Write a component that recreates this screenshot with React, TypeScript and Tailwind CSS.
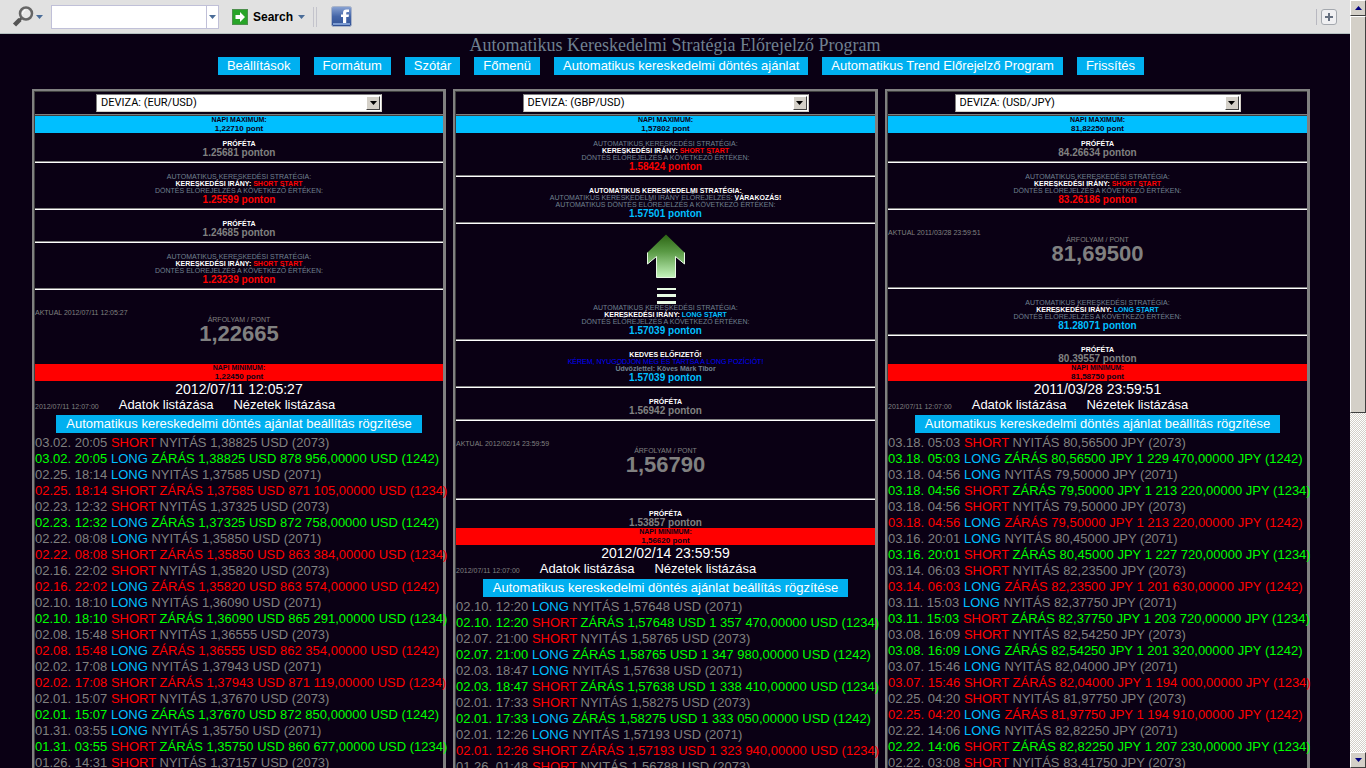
import type { ReactNode } from 'react';

type Direction = 'LONG' | 'SHORT';

interface Trade {
    when: string;
    dir: Direction;
    price: string;
    // closing balance, missing while the position is still open
    total?: string;
    gain?: boolean;
}

// ─── data ─────────────────────────────────────────────────────────────────────

const NAV = [
    'Beállítások',
    'Formátum',
    'Szótár',
    'Főmenü',
    'Automatikus kereskedelmi döntés ajánlat',
    'Automatikus Trend Előrejelző Program',
    'Frissítés',
];

const EUR_TRADES: Trade[] = [
    { when: '03.02. 20:05', dir: 'SHORT', price: '1,38825', total: '878 956,00000', gain: true },
    { when: '02.25. 18:14', dir: 'LONG', price: '1,37585', total: '871 105,00000' },
    { when: '02.23. 12:32', dir: 'SHORT', price: '1,37325', total: '872 758,00000', gain: true },
    { when: '02.22. 08:08', dir: 'LONG', price: '1,35850', total: '863 384,00000' },
    { when: '02.16. 22:02', dir: 'SHORT', price: '1,35820', total: '863 574,00000' },
    { when: '02.10. 18:10', dir: 'LONG', price: '1,36090', total: '865 291,00000', gain: true },
    { when: '02.08. 15:48', dir: 'SHORT', price: '1,36555', total: '862 354,00000' },
    { when: '02.02. 17:08', dir: 'LONG', price: '1,37943', total: '871 119,00000' },
    { when: '02.01. 15:07', dir: 'SHORT', price: '1,37670', total: '872 850,00000', gain: true },
    { when: '01.31. 03:55', dir: 'LONG', price: '1,35750', total: '860 677,00000', gain: true },
    { when: '01.26. 14:31', dir: 'SHORT', price: '1,37157' },
];

const GBP_TRADES: Trade[] = [
    { when: '02.10. 12:20', dir: 'LONG', price: '1,57648', total: '1 357 470,00000', gain: true },
    { when: '02.07. 21:00', dir: 'SHORT', price: '1,58765', total: '1 347 980,00000', gain: true },
    { when: '02.03. 18:47', dir: 'LONG', price: '1,57638', total: '1 338 410,00000', gain: true },
    { when: '02.01. 17:33', dir: 'SHORT', price: '1,58275', total: '1 333 050,00000', gain: true },
    { when: '02.01. 12:26', dir: 'LONG', price: '1,57193', total: '1 323 940,00000' },
    { when: '01.26. 01:48', dir: 'SHORT', price: '1,56788' },
];

const JPY_TRADES: Trade[] = [
    { when: '03.18. 05:03', dir: 'SHORT', price: '80,56500', total: '1 229 470,00000', gain: true },
    { when: '03.18. 04:56', dir: 'LONG', price: '79,50000', total: '1 213 220,00000', gain: true },
    { when: '03.18. 04:56', dir: 'SHORT', price: '79,50000', total: '1 213 220,00000' },
    { when: '03.16. 20:01', dir: 'LONG', price: '80,45000', total: '1 227 720,00000', gain: true },
    { when: '03.14. 06:03', dir: 'SHORT', price: '82,23500', total: '1 201 630,00000' },
    { when: '03.11. 15:03', dir: 'LONG', price: '82,37750', total: '1 203 720,00000', gain: true },
    { when: '03.08. 16:09', dir: 'SHORT', price: '82,54250', total: '1 201 320,00000', gain: true },
    { when: '03.07. 15:46', dir: 'LONG', price: '82,04000', total: '1 194 000,00000' },
    { when: '02.25. 04:20', dir: 'SHORT', price: '81,97750', total: '1 194 910,00000' },
    { when: '02.22. 14:06', dir: 'LONG', price: '82,82250', total: '1 207 230,00000', gain: true },
    { when: '02.22. 03:08', dir: 'SHORT', price: '83,41750' },
];

const DIR_CLASSES: Record<Direction, string> = {
    LONG: 'text-[#00bfff]',
    SHORT: 'text-[#ff0000]',
};

// ─── icons ────────────────────────────────────────────────────────────────────

function MagnifierSvg() {
    return (
        <svg className="w-[22px] h-[22px]" viewBox="0 0 22 22" fill="none">
            <path d="M2.500 19L8 13.500" stroke="#555" strokeWidth="4.500" />
            <path d="M7.500 14L10 11.500" stroke="#555" strokeWidth="2.500" />
            <circle cx="14" cy="7.500" r="6" fill="#e8e8e8" stroke="#666" strokeWidth="2.500" />
            <path d="M10.500 8a4 4 0 013-4" stroke="#fff" />
        </svg>
    );
}

function CaretSvg() {
    return (
        <svg className="w-[7px] h-1" viewBox="0 0 7 4">
            <path d="M0 0h7L3.500 4z" fill="#4a6c98" />
        </svg>
    );
}

function GoSvg() {
    return (
        <svg className="w-4 h-4" viewBox="0 0 16 16">
            <rect x=".5" y=".5" width="15" height="15" fill="#28a428" stroke="#4d8f4d" />
            <path d="M3.500 6H8V3l5 5-5 5v-3H3.500z" fill="#fff" />
        </svg>
    );
}

function FacebookSvg() {
    return (
        <svg className="w-[22px] h-[22px]" viewBox="0 0 22 22">
            <defs>
                <linearGradient id="fb" x1="0" y1="0" x2="0" y2="1">
                    <stop offset="0" stopColor="#8aa4d4" />
                    <stop offset=".5" stopColor="#4566a8" />
                    <stop offset="1" stopColor="#2f4f94" />
                </linearGradient>
            </defs>
            <rect x=".5" y=".5" width="20" height="20" rx="2" fill="url(#fb)" stroke="#aab4c8" />
            <path d="M2 17h17v2H2z" fill="#7c9bd2" />
            <path d="M12 17v-6h-2V8.500h2V7c0-2.500 1.300-3.500 3.300-3.500H18V6h-1.500c-1 0-1.300.5-1.300 1.300v1.200H18l-.4 2.500h-2.400v6z" fill="#fff" />
        </svg>
    );
}

function PlusSvg() {
    return (
        <svg className="w-4 h-4" viewBox="0 0 16 16">
            <rect x=".5" y=".5" width="15" height="15" rx="2.500" fill="#f0f0f2" stroke="#a4a8ae" />
            <path d="M8 4v8M4 8h8" stroke="#667080" strokeWidth="2" />
        </svg>
    );
}

function UpArrowSvg() {
    return (
        <svg className="w-10 h-[70px] mx-auto" viewBox="0 0 40 70">
            <defs>
                <linearGradient id="up" x1="0" y1="0" x2="0" y2="1">
                    <stop offset="0" stopColor="#2c6413" />
                    <stop offset=".4" stopColor="#5a9a45" />
                    <stop offset="1" stopColor="#c4f4bc" />
                </linearGradient>
            </defs>
            <path d="M20 .5L38.500 18.500V30L29.500 22.500V43.500H10.500V22.500L1.500 30V18.500z" fill="url(#up)" />
            <path d="M1.500 18.500V30L10.500 22.500V43.500H29.500V22.500L38.500 30V18.500" fill="none" stroke="#e8f8e4" />
            <path d="M11 54h19v2H11zM11 60h19v3H11zM11 67h19v3H11z" fill="#e8fbe4" />
        </svg>
    );
}

function TriangleSvg({ down = false, dark = false }: { down?: boolean; dark?: boolean }) {
    return (
        <svg className="w-[7px] h-1" viewBox="0 0 7 4">
            <path d={down ? 'M0 0h7L3.500 4z' : 'M0 4h7L3.500 0z'} fill={dark ? '#000' : '#000080'} />
        </svg>
    );
}

// ─── browser chrome ───────────────────────────────────────────────────────────

function Toolbar() {
    return (
        <div className="flex items-center h-[34px] shrink-0 bg-[#e1e1e1] border-b border-[#b4c0c0] pl-3 pr-[13px]">
            <button type="button" aria-label="Keresőmotor" className="flex items-center gap-[2px] w-[39px]">
                <MagnifierSvg />
                <CaretSvg />
            </button>
            <div className="flex w-[168px] h-6 bg-white border border-[#c0c0d8]">
                <input type="text" aria-label="Keresés" className="flex-1 min-w-0 px-1 text-xs outline-none" />
                <button type="button" aria-label="Előzmények" className="w-3 flex items-center justify-center border-l border-[#c0c0d8]">
                    <CaretSvg />
                </button>
            </div>
            <button type="button" className="flex items-center gap-[5px] ml-[13px] text-xs font-bold text-black">
                <GoSvg />
                Search
                <CaretSvg />
            </button>
            <div className="w-1 h-5 ml-2 mr-[14px] border-x border-[#c4c4cc]" />
            <button type="button" aria-label="Facebook">
                <FacebookSvg />
            </button>
            <div className="w-px h-4 ml-auto mr-1 bg-[#b8b8c0]" />
            <button type="button" aria-label="Hozzáadás">
                <PlusSvg />
            </button>
        </div>
    );
}

const BEVEL = 'bg-[#d4d0c8] border border-t-white border-l-white border-r-[#404040] border-b-[#404040]';

function Scrollbar() {
    return (
        <div className="flex flex-col w-4 shrink-0 bg-[repeating-conic-gradient(#d4d0c8_0_25%,#ffffff_0_50%)] bg-[length:2px_2px]">
            <button type="button" aria-label="Fel" className={`h-4 flex items-center justify-center ${BEVEL}`}>
                <TriangleSvg />
            </button>
            <div className="flex-1">
                <div className={`h-[54%] ${BEVEL}`} />
            </div>
            <button type="button" aria-label="Le" className={`h-4 flex items-center justify-center ${BEVEL}`}>
                <TriangleSvg down />
            </button>
        </div>
    );
}

// ─── column blocks ────────────────────────────────────────────────────────────

function Rule() {
    return <div className="h-[2px] bg-white border-t border-[#808080]" />;
}

function Band({ label, value, min = false }: { label: string; value: string; min?: boolean }) {
    return (
        <div className={`h-[17px] text-center font-bold text-[#0a0014] ${min ? 'bg-[#ff0000]' : 'bg-[#00bfff]'}`}>
            <p className="text-[7px] leading-[8px]">{label}</p>
            <p className="text-[8px] leading-[9px]">{value}</p>
        </div>
    );
}

function Block({ first = false, last = false, children }: { first?: boolean; last?: boolean; children: ReactNode }) {
    return (
        <div
            className={`text-center text-[7px] leading-[7px] text-[#708090] ${first ? 'pt-[7px]' : 'pt-[10px]'} ${last ? 'h-[28px]' : 'pb-[2px]'}`}
        >
            {children}
        </div>
    );
}

function Level({ value, color }: { value: string; color: string }) {
    return <p className={`text-[10px] leading-[12px] font-bold ${color}`}>{value} ponton</p>;
}

function Prophet({ value, first, last }: { value: string; first?: boolean; last?: boolean }) {
    return (
        <Block first={first} last={last}>
            <p className="font-bold text-white">PRÓFÉTA</p>
            <Level value={value} color="text-[#808080]" />
        </Block>
    );
}

function Strategy({ dir, value, first, children }: { dir: Direction; value: string; first?: boolean; children?: ReactNode }) {
    return (
        <Block first={first}>
            {children}
            <p>AUTOMATIKUS KERESKEDÉSI STRATÉGIA:</p>
            <p className="font-bold">
                <span className="text-white">KERESKEDÉSI IRÁNY:</span> <span className={DIR_CLASSES[dir]}>{dir} START</span>
            </p>
            <p>DÖNTÉS ELŐREJELZÉS A KÖVETKEZŐ ÉRTÉKEN:</p>
            <Level value={value} color={DIR_CLASSES[dir]} />
        </Block>
    );
}

function Actual({ time, price, last = false }: { time: string; price: string; last?: boolean }) {
    return (
        <div className={`pt-[19px] text-[7px] leading-[7px] text-[#808080] ${last ? 'pb-[19px]' : 'pb-[22px]'}`}>
            <p>AKTUAL {time}</p>
            <p className="text-center">ÁRFOLYAM / PONT</p>
            <p className="text-center text-[22px] leading-[22px] font-bold">{price}</p>
        </div>
    );
}

function TradeRows({ trade, currency }: { trade: Trade; currency: string }) {
    const opposite: Direction = trade.dir === 'LONG' ? 'SHORT' : 'LONG';
    return (
        <>
            <li className="text-[#808080]">
                {trade.when} <span className={DIR_CLASSES[trade.dir]}>{trade.dir}</span> NYITÁS {trade.price} {currency} ({trade.dir === 'LONG' ? '2071' : '2073'})
            </li>
            {trade.total && (
                <li className={trade.gain ? 'text-[#00ff00]' : 'text-[#ff0000]'}>
                    {trade.when} <span className={DIR_CLASSES[opposite]}>{opposite}</span> ZÁRÁS {trade.price} {currency} {trade.total} {currency} ({opposite === 'LONG' ? '1242' : '1234'})
                </li>
            )}
        </>
    );
}

function PairColumn({
    pair,
    currency,
    max,
    min,
    time,
    trades,
    children,
}: {
    pair: string;
    currency: string;
    max: string;
    min: string;
    time: string;
    trades: Trade[];
    children: ReactNode;
}) {
    return (
        <section className="min-w-0 border-t-2 border-l-2 border-r-3 border-[#808080]">
            <div className="h-full border-t border-l border-[#404040]">
                <div className="flex justify-center pt-[2px] pb-[2px]">
                    <div className="relative w-[286px]">
                        <select
                            aria-label="Deviza"
                            className="block w-full h-[18px] pl-1 appearance-none bg-white text-black border border-t-[#808080] border-l-[#808080] border-[#d4d0c8] font-[Roboto,sans-serif] text-[11px] leading-[14px]"
                        >
                            <option>DEVIZA: ({pair})</option>
                        </select>
                        <span className={`absolute right-[2px] top-[2px] w-[14px] h-[14px] flex items-center justify-center pointer-events-none ${BEVEL}`}>
                            <TriangleSvg down dark />
                        </span>
                    </div>
                </div>
                <div className="h-[2px] bg-[#404040] border-t border-[#808080]" />
                <Band label="NAPI MAXIMUM:" value={`${max} pont`} />
                {children}
                <Band label="NAPI MINIMUM:" value={`${min} pont`} min />
                <p className="text-center text-sm leading-4 text-white">{time}</p>
                <div className="flex items-baseline gap-5 h-4 text-[13px] leading-4 text-white">
                    <span className="text-[7px] text-[#808080]">2012/07/11 12:07:00</span>
                    <a href="#adatok">Adatok listázása</a>
                    <a href="#nezetek">Nézetek listázása</a>
                </div>
                <div className="flex justify-center py-[2px]">
                    <button type="button" className="h-[18px] px-[10px] bg-[#00b0f0] text-[13px] leading-[18px] text-white whitespace-nowrap">
                        Automatikus kereskedelmi döntés ajánlat beállítás rögzítése
                    </button>
                </div>
                <ul className="text-[13px] leading-4 whitespace-nowrap">
                    {trades.map((trade) => (
                        <TradeRows key={trade.when + trade.dir} trade={trade} currency={currency} />
                    ))}
                </ul>
            </div>
        </section>
    );
}

// ─── page ─────────────────────────────────────────────────────────────────────

export default function App() {
    return (
        <div className="flex h-screen overflow-hidden bg-[#0a0014] font-['Liberation_Sans',Arial,sans-serif]">
            <div className="flex-1 min-w-0 flex flex-col">
                <Toolbar />
                <main className="flex-1 min-h-0 flex flex-col">
                    <h1 className="h-[23px] shrink-0 text-center font-['Liberation_Serif',serif] text-[18px] leading-[22px] text-[#708090]">
                        Automatikus Kereskedelmi Stratégia Előrejelző Program
                    </h1>
                    <nav className="flex justify-center gap-[14px] shrink-0 pl-3">
                        {NAV.map((item) => (
                            <a key={item} href="#" className="h-[18px] px-[9px] bg-[#00b0f0] text-[13px] leading-[18px] text-white whitespace-nowrap">
                                {item}
                            </a>
                        ))}
                    </nav>
                    <div className="flex-1 min-h-0 grid grid-cols-[414fr_425fr_425fr] gap-[7px] pt-[14px] pl-8 pr-10">
                        <PairColumn pair="EUR/USD" currency="USD" max="1,22710" min="1,22450" time="2012/07/11 12:05:27" trades={EUR_TRADES}>
                            <Prophet value="1.25681" first />
                            <Rule />
                            <Strategy dir="SHORT" value="1.25599" />
                            <Rule />
                            <Prophet value="1.24685" />
                            <Rule />
                            <Strategy dir="SHORT" value="1.23239" />
                            <Rule />
                            <Actual time="2012/07/11 12:05:27" price="1,22665" last />
                        </PairColumn>
                        <PairColumn pair="GBP/USD" currency="USD" max="1,57802" min="1,56620" time="2012/02/14 23:59:59" trades={GBP_TRADES}>
                            <Strategy dir="SHORT" value="1.58424" first />
                            <Rule />
                            <Block>
                                <p className="font-bold text-white">AUTOMATIKUS KERESKEDELMI STRATÉGIA:</p>
                                <p>
                                    AUTOMATIKUS KERESKEDELMI IRÁNY ELŐREJELZÉS: <b className="text-white">VÁRAKOZÁS!</b>
                                </p>
                                <p>AUTOMATIKUS DÖNTÉS ELŐREJELZÉS A KÖVETKEZŐ ÉRTÉKEN:</p>
                                <Level value="1.57501" color="text-[#00bfff]" />
                            </Block>
                            <Rule />
                            <Strategy dir="LONG" value="1.57039">
                                <UpArrowSvg />
                            </Strategy>
                            <Rule />
                            <Block>
                                <p className="font-bold text-white">KEDVES ELŐFIZETŐ!</p>
                                <p className="text-[#0000ff]">KÉREM, NYUGODJON MEG ÉS TARTSA A LONG POZÍCIÓT!</p>
                                <p className="font-bold">Üdvözlettel: Köves Márk Tibor</p>
                                <Level value="1.57039" color="text-[#00bfff]" />
                            </Block>
                            <Rule />
                            <Prophet value="1.56942" />
                            <Rule />
                            <Actual time="2012/02/14 23:59:59" price="1,56790" />
                            <Rule />
                            <Prophet value="1.53857" last />
                        </PairColumn>
                        <PairColumn pair="USD/JPY" currency="JPY" max="81,82250" min="81,58750" time="2011/03/28 23:59:51" trades={JPY_TRADES}>
                            <Prophet value="84.26634" first />
                            <Rule />
                            <Strategy dir="SHORT" value="83.26186" />
                            <Rule />
                            <Actual time="2011/03/28 23:59:51" price="81,69500" />
                            <Rule />
                            <Strategy dir="LONG" value="81.28071" />
                            <Rule />
                            <Prophet value="80.39557" last />
                        </PairColumn>
                    </div>
                </main>
            </div>
            <Scrollbar />
        </div>
    );
}
